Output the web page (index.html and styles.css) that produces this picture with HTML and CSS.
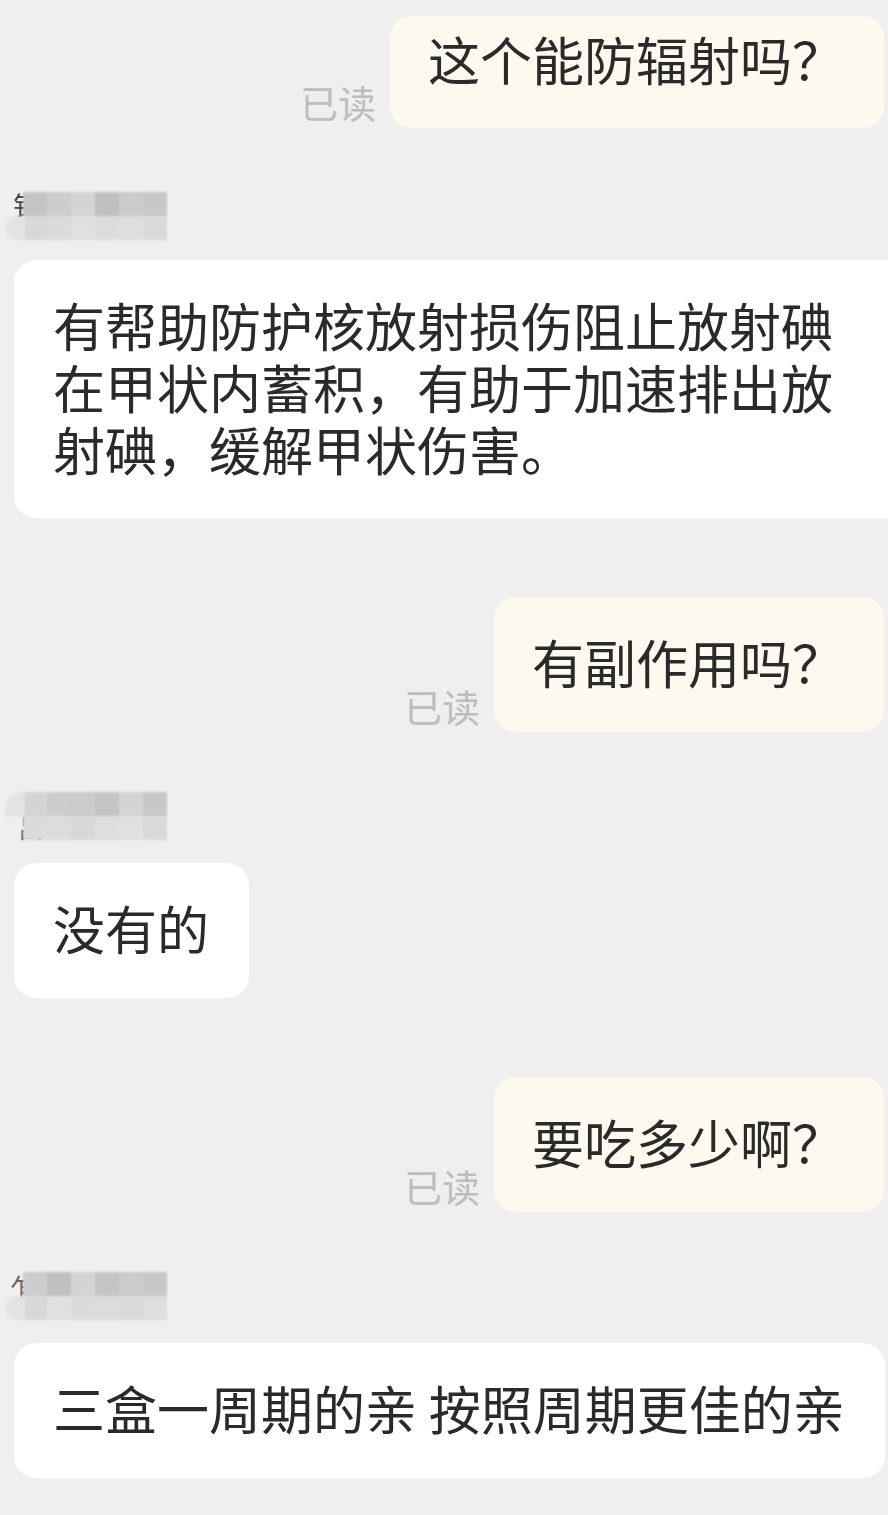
FILE: index.html
```html
<!DOCTYPE html>
<html lang="zh-CN">
<head>
<meta charset="utf-8">
<title>聊天记录</title>
<link rel="stylesheet" href="styles.css">
</head>
<body>
<div class="chat">
  <div class="row me first">
    <span class="read">已读</span>
    <div class="bubble">这个能防辐射吗？</div>
  </div>

  <div class="name n1">
    <span class="glyph">钅</span>
    <div class="mosaic">
      <i class="c1"></i><i class="c2"></i><i class="c3"></i><i class="c4"></i><i class="c5"></i><i class="c6"></i>
      <i class="d1"></i><i class="d2"></i><i class="d3"></i><i class="d4"></i><i class="d5"></i><i class="d6"></i>
    </div>
  </div>
  <div class="row them">
    <div class="bubble wide">有帮助防护核放射损伤阻止放射碘在甲状内蓄积，有助于加速排出放射碘，缓解甲状伤害。</div>
  </div>

  <div class="row me">
    <span class="read">已读</span>
    <div class="bubble">有副作用吗？</div>
  </div>

  <div class="name n2">
    <span class="glyph">吕</span>
    <div class="mosaic">
      <i class="c3"></i><i class="c2"></i><i class="c5"></i><i class="c1"></i><i class="c3"></i><i class="c6"></i>
      <i class="d2"></i><i class="d4"></i><i class="d1"></i><i class="d5"></i><i class="d3"></i><i class="d6"></i>
    </div>
  </div>
  <div class="row them">
    <div class="bubble">没有的</div>
  </div>

  <div class="row me">
    <span class="read">已读</span>
    <div class="bubble">要吃多少啊？</div>
  </div>

  <div class="name n3">
    <span class="glyph">乍</span>
    <div class="mosaic">
      <i class="c2"></i><i class="c4"></i><i class="c3"></i><i class="c1"></i><i class="c5"></i><i class="c6"></i>
      <i class="d1"></i><i class="d3"></i><i class="d2"></i><i class="d4"></i><i class="d6"></i><i class="d5"></i>
    </div>
  </div>
  <div class="row them">
    <div class="bubble">三盒一周期的亲 按照周期更佳的亲</div>
  </div>
</div>
</body>
</html>
```

FILE: styles.css
```css
html, body {
  margin: 0;
  padding: 0;
}
body {
  width: 888px;
  height: 1515px;
  overflow: hidden;
  background: #efefef;
  font-family: "Noto Sans CJK SC", "Noto Sans", sans-serif;
  color: #2a2a2a;
}
.chat {
  display: flex;
  flex-direction: column;
  padding-top: 16px;
}
.row {
  display: flex;
  align-items: flex-end;
}
.row.me {
  justify-content: flex-end;
  gap: 14px;
  padding-right: 4px;
  margin-top: 79px;
}
.row.me.first {
  margin-top: 0;
}
.row.them {
  justify-content: flex-start;
  padding-left: 14px;
}
.bubble {
  font-size: 52px;
  line-height: 62px;
  padding: 34px 40px 39px 38px;
  border-radius: 22px;
  background: #ffffff;
}
.me .bubble {
  background: #fdf9ef;
}
.first .bubble {
  padding-top: 12px;
  padding-bottom: 38px;
}
.them .bubble {
  padding-left: 39px;
}
.bubble.wide {
  flex: 1;
  margin-right: -20px;
  padding-bottom: 38px;
}
.read {
  font-size: 38px;
  line-height: 38px;
  color: #bdbdbd;
  margin-bottom: 7px;
}
.name {
  position: relative;
  height: 48px;
  width: 170px;
  margin-top: 60px;
  margin-bottom: 23px;
}
.name.n1 {
  margin-top: 64px;
  margin-bottom: 20px;
}
.glyph {
  position: absolute;
  left: 13px;
  top: 0;
  font-size: 26px;
  line-height: 26px;
  color: #444;
}
.n2 .glyph {
  top: 22px;
  left: 18px;
  color: #555;
}
.n3 .glyph {
  left: 10px;
  top: 2px;
  color: #666;
}
.mosaic {
  position: absolute;
  left: 23px;
  top: 0;
  display: grid;
  grid-template-columns: repeat(6, 24px);
  grid-template-rows: 24px 24px;
  filter: blur(0.8px);
}
.mosaic::before {
  content: "";
  position: absolute;
  left: -18px;
  top: 24px;
  width: 20px;
  height: 24px;
  border-radius: 12px 0 0 12px;
  background: #e3e3e3;
}
.n2 .mosaic::before {
  top: 0;
  border-radius: 18px 0 0 0;
}
.mosaic i {
  display: block;
}
.c1 { background: #c4c4c4; }
.c2 { background: #cdcdcd; }
.c3 { background: #d4d4d4; }
.c4 { background: #c0c0c0; }
.c5 { background: #cbcbcb; }
.c6 { background: #c8c8c8; }
.d1 { background: #d8d8d8; }
.d2 { background: #dbdbdb; }
.d3 { background: #e0e0e0; }
.d4 { background: #dcdcdc; }
.d5 { background: #dedede; }
.d6 { background: #d9d9d9; }
```
